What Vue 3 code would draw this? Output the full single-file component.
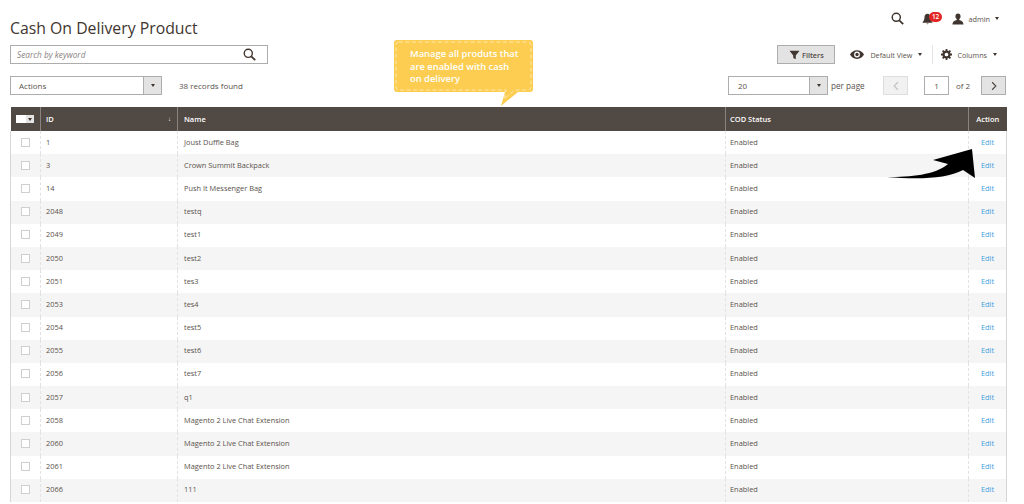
<script setup>
const rows = [
  ['1', 'Joust Duffle Bag'], ['3', 'Crown Summit Backpack'], ['14', 'Push It Messenger Bag'],
  ['2048', 'testq'], ['2049', 'test1'], ['2050', 'test2'], ['2051', 'tes3'], ['2053', 'tes4'],
  ['2054', 'test5'], ['2055', 'test6'], ['2056', 'test7'], ['2057', 'q1'],
  ['2058', 'Magento 2 Live Chat Extension'], ['2060', 'Magento 2 Live Chat Extension'],
  ['2061', 'Magento 2 Live Chat Extension'], ['2066', '111']
]
</script>

<template>
  <div class="page">
    <header class="top">
      <h1>Cash On Delivery Product</h1>
      <div class="top-actions">
        <svg class="i-search" viewBox="0 0 16 16" width="13" height="13"><circle cx="6.500" cy="6.500" r="5" fill="none" stroke="#41362f" stroke-width="1.800"/><path d="M10.200 10.200 15 15" stroke="#41362f" stroke-width="2.200"/></svg>
        <span class="bell">
          <svg viewBox="0 0 14 16" width="11" height="12"><path d="M7 1C4.500 1 3 3 3 5.500c0 3-1 5-2.500 6.500v1h13v-1C12 10.500 11 8.500 11 5.500 11 3 9.500 1 7 1z M5.500 14a1.600 1.600 0 0 0 3 0z" fill="#41362f"/></svg>
          <b class="badge">12</b>
        </span>
        <span class="user">
          <svg viewBox="0 0 14 14" width="12" height="12"><path d="M7 0.500c-2 0-3 1.500-3 3.200 0 1.500.6 2.700 1.500 3.300v1.200C3.500 8.800.8 9.500.5 13.500h13c-.3-4-3-4.700-5-5.300V7c.9-.6 1.500-1.800 1.500-3.300C10 2 9 .5 7 .5z" fill="#41362f"/></svg>
          <span>admin</span><i class="caret"></i>
        </span>
      </div>
    </header>

    <div class="toolbar">
      <div class="search">
        <span>Search by keyword</span>
        <svg viewBox="0 0 16 16" width="13" height="13"><circle cx="6.500" cy="6.500" r="5" fill="none" stroke="#41362f" stroke-width="1.700"/><path d="M10.200 10.200 15 15" stroke="#41362f" stroke-width="2.200"/></svg>
      </div>
      <div class="tools">
        <button class="filters">
          <svg viewBox="0 0 12 12" width="11" height="10"><path d="M0 1h12L7.500 6.500V11l-3-1.500V6.500z" fill="#41362f"/></svg>
          Filters
        </button>
        <span class="tool view">
          <svg viewBox="0 0 16 10" width="14" height="9"><path d="M8 0C4.500 0 1.500 2 0 5c1.500 3 4.500 5 8 5s6.500-2 8-5c-1.500-3-4.500-5-8-5zm0 8.300A3.300 3.300 0 1 1 8 1.700a3.300 3.300 0 0 1 0 6.600z" fill="#41362f"/><circle cx="8" cy="5" r="1.900" fill="#41362f"/></svg>
          <span>Default View</span><i class="caret"></i>
        </span>
        <span class="tool cols">
          <svg viewBox="0 0 16 16" width="11" height="11"><circle cx="8" cy="8" r="4.300" fill="none" stroke="#41362f" stroke-width="3.200"/><path d="M8 0v3M8 13v3M0 8h3M13 8h3M2.300 2.300l2.200 2.200M11.500 11.500l2.200 2.200M2.300 13.700l2.200-2.200M11.500 4.500l2.200-2.200" stroke="#41362f" stroke-width="2.600"/></svg>
          <span>Columns</span><i class="caret"></i>
        </span>
      </div>
    </div>

    <div class="toolbar second">
      <div class="left">
        <div class="select actions"><span>Actions</span><em><i class="caret dark"></i></em></div>
        <span class="found">38 records found</span>
      </div>
      <div class="pager">
        <div class="select per"><span>20</span><em><i class="caret dark"></i></em></div>
        <span class="perlabel">per page</span>
        <span class="nav off"><svg viewBox="0 0 8 12" width="6" height="10"><path d="M6.500 1 1.500 6l5 5" fill="none" stroke="#c4c1bf" stroke-width="1.500"/></svg></span>
        <span class="pagebox">1</span>
        <span class="of">of 2</span>
        <span class="nav"><svg viewBox="0 0 8 12" width="6" height="10"><path d="M1.500 1l5 5-5 5" fill="none" stroke="#514943" stroke-width="1.500"/></svg></span>
      </div>
    </div>

    <div class="callout">
      <svg class="bubble" viewBox="0 0 140 70" width="140" height="70">
        <path d="M3 0h133a3 3 0 0 1 3 3v46a3 3 0 0 1-3 3h-12l-17 14 4-14H3a3 3 0 0 1-3-3V3a3 3 0 0 1 3-3z" fill="#fccd50"/>
        <path d="M5 2h129a3 3 0 0 1 3 3v42a3 3 0 0 1-3 3h-13l-11 9 2-9H5a3 3 0 0 1-3-3V5a3 3 0 0 1 3-3z" fill="none" stroke="#fff0c4" stroke-width=".8" stroke-dasharray="4 2.500"/>
      </svg>
      <p>Manage all produts that are enabled with cash on delivery</p>
    </div>

    <svg class="arrow" viewBox="0 0 90 36" width="90" height="36">
      <path d="M0 28C24 28 48 26 61 15L46 11 85 0l3 29-12-8C60 30 30 30.500 0 28z" fill="#000"/>
    </svg>

    <table>
      <colgroup><col class="c0" /><col class="c1" /><col class="c2" /><col class="c3" /><col class="c4" /></colgroup>
      <thead>
        <tr>
          <th class="chk"><span class="headchk"><i></i><b><i class="caret dark"></i></b></span></th>
          <th class="idcell"><div class="idhead"><span>ID</span><small>↓</small></div></th>
          <th>Name</th>
          <th class="codcell">COD Status</th>
          <th>Action</th>
        </tr>
      </thead>
      <tbody>
        <tr v-for="r in rows" :key="r[0]">
          <td class="chk"><span class="box"></span></td>
          <td class="idcell">{{ r[0] }}</td>
          <td>{{ r[1] }}</td>
          <td class="codcell">Enabled</td>
          <td class="edit">Edit</td>
        </tr>
      </tbody>
    </table>
  </div>
</template>

<style>
html, body { margin: 0; height: 504px; overflow: hidden; background: #fff; }
</style>

<style scoped>
.page {
  position: relative;
  box-sizing: border-box;
  width: 1024px;
  height: 504px;
  overflow: hidden;
  padding: 0 18px 0 10px;
  font-family: "Open Sans", sans-serif;
  color: #5a524c;
  font-size: 8px;
}
.top { display: flex; justify-content: space-between; height: 44px; box-sizing: border-box; padding-top: 12px; }
h1 { margin: 0; font-size: 15.800px; font-weight: 400; color: #41362f; line-height: 32px; }
.top-actions { display: flex; align-items: center; height: 13px; padding-right: 7px; }
.i-search { margin-right: 18px; }
.bell { position: relative; display: flex; margin-right: 19px; }
.badge { position: absolute; left: 7px; top: -1px; background: #e22626; color: #fff; border-radius: 5px; font-size: 6.500px; font-weight: 600; line-height: 10px; padding: 0 2.500px; }
.user { display: flex; align-items: center; gap: 4px; font-size: 7.300px; }
.caret { display: inline-block; width: 0; height: 0; border: 2.500px solid transparent; border-top: 3px solid #41362f; border-bottom: 0; margin-left: 1px; }
.caret.dark { margin: 0; }
.toolbar { display: flex; justify-content: space-between; align-items: center; height: 19px; margin-top: 1px; }
.search { box-sizing: border-box; width: 258px; height: 19px; border: 1px solid #adadad; display: flex; align-items: center; justify-content: space-between; padding: 0 11px 0 6px; font-style: italic; color: #8a8380; font-size: 8.300px; }
.tools { display: flex; align-items: center; height: 19px; padding-right: 9px; }
.filters { box-sizing: border-box; width: 58px; height: 19px; background: #e3e3e3; border: 1px solid #adadad; display: flex; align-items: center; justify-content: center; gap: 2px; font: 600 7.300px "Open Sans", sans-serif; color: #514943; padding: 0; margin-right: 15px; }
.tool { display: flex; align-items: center; font-size: 7.200px; }
.view { gap: 6px; padding-right: 10px; border-right: 1px solid #e3e3e3; height: 19px; }
.view .caret { margin-left: 0; }
.cols { gap: 5px; padding-left: 8px; }
.cols .caret { margin-left: 1px; }
.second { margin-top: 12px; }
.left { display: flex; align-items: center; gap: 17px; }
.found { font-size: 8px; }
.select { box-sizing: border-box; height: 19px; border: 1px solid #adadad; display: flex; align-items: center; justify-content: space-between; font-size: 8px; }
.select em { width: 17px; height: 17px; background: #e3e3e3; border-left: 1px solid #adadad; display: flex; align-items: center; justify-content: center; }
.actions { width: 152px; padding-left: 8px; }
.per { width: 100px; padding-left: 9px; }
.pager { display: flex; align-items: center; }
.perlabel { font-size: 8.200px; margin-left: 3px; width: 52px; }
.nav { box-sizing: border-box; width: 25px; height: 19px; display: flex; align-items: center; justify-content: center; background: #e3e3e3; border: 1px solid #adadad; }
.nav.off { background: #f1f1f1; border-color: #dedede; }
.pagebox { box-sizing: border-box; width: 25px; height: 19px; border: 1px solid #adadad; margin-left: 16px; display: flex; align-items: center; justify-content: center; font-size: 8px; }
.of { box-sizing: border-box; font-size: 8px; width: 32px; padding-left: 7px; }
.callout { position: absolute; left: 394px; top: 40px; width: 140px; height: 70px; }
.bubble { position: absolute; left: 0; top: 0; }
.callout p { position: relative; margin: 0; padding: 8px 12px 0 16px; color: #fff; font: 600 9.400px/12.500px "Open Sans", sans-serif; }
.arrow { position: absolute; left: 887px; top: 149px; z-index: 2; }
table { margin-top: 12px; width: 996px; border-collapse: collapse; table-layout: fixed; }
.c0 { width: 30px; } .c1 { width: 137px; } .c2 { width: 548px; } .c3 { width: 243px; } .c4 { width: 38px; }
th { height: 24px; padding: 0 6px 1px; box-sizing: border-box; background: #514943; color: #fff; font-size: 7.500px; font-weight: 600; text-align: left; border-left: 1px solid #8a837f; }
th:first-child { border-left: 0; }
th:last-child { text-align: center; padding: 0 0 1px; }
td { height: 23.200px; box-sizing: border-box; padding: 0 6px 2px; font-size: 7.400px; border-left: 1px dashed #e2e2e2; }
td:last-child { border-right: 1px solid #d6d6d6; text-align: center; padding: 0 0 2px; }
td:first-child { border-left: 1px solid #d6d6d6; }
tbody tr:nth-child(even) td { background: #f5f5f5; }
th.idcell, td.idcell { padding-left: 5px; }
th.codcell, td.codcell { padding-left: 4px; }
.chk { text-align: center; padding: 0; }
td.chk { padding: 0 0 1px; }
.box { display: block; width: 7px; height: 7px; border: 1px solid #cfcfcf; background: #fff; margin: 0 auto; }
.headchk { display: flex; width: 18px; height: 8px; margin: 0 auto; background: #fff; }
.headchk > i { width: 10px; }
.headchk > b { width: 8px; background: #e3e3e3; display: flex; align-items: center; justify-content: center; }
.idhead { display: flex; justify-content: space-between; align-items: center; }
.idhead small { font-size: 6px; font-weight: 400; }
.edit { color: #3b9ede; }
</style>
